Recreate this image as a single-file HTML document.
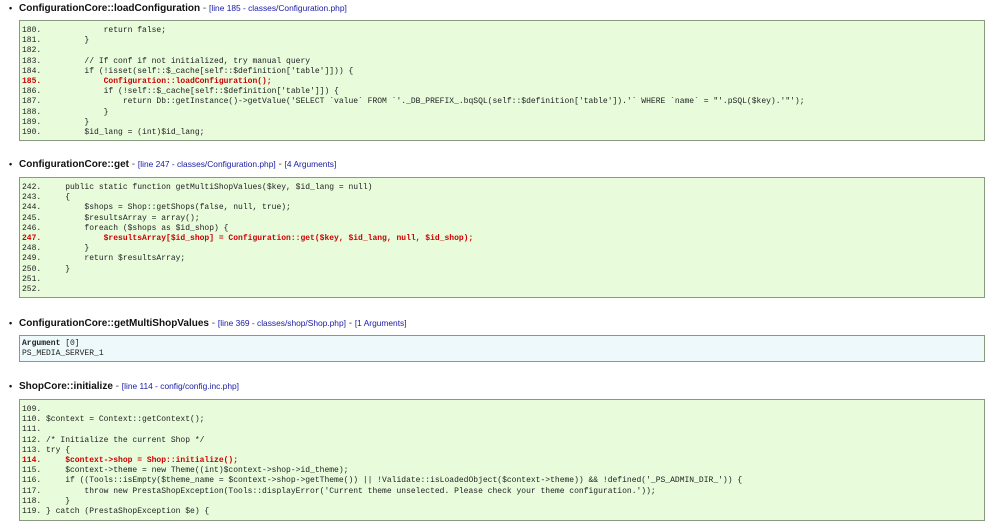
<!DOCTYPE html>
<html><head><meta charset="utf-8"><style>
html,body{margin:0;padding:0;background:#fff;width:1000px;height:527px;overflow:hidden}
.h{position:absolute;left:9px;font-family:"Liberation Sans",sans-serif;font-size:10px;font-weight:bold;color:#111;white-space:nowrap;line-height:12px}
.h .b{display:inline-block;width:10px;font-size:9px}
.h .l{font-weight:normal;font-size:8.4px;color:#1a1aa6}
.h .d{font-weight:normal;color:#444}
.box{position:absolute;left:19px;width:966px;border:1px solid #8a9a80;background:#e8fcdc;box-sizing:border-box}
pre{margin:0;padding:5px 0 0 2px;font-family:"Liberation Mono",monospace;font-size:8px;line-height:10.2px;color:#222}
.r{color:#c00;font-weight:bold}
.blue{background:#eef9fb}
</style></head><body>

<div class="h" style="top:2px"><span class="b">•</span>ConfigurationCore::loadConfiguration <span class="d">-</span> <span class="l">[line 185 - classes/Configuration.php]</span></div>
<div class="box" style="top:20px;height:121px"><pre>180.             return false;
181.         }
182.
183.         // If conf if not initialized, try manual query
184.         if (!isset(self::$_cache[self::$definition['table']])) {
<span class="r">185.             Configuration::loadConfiguration();</span>
186.             if (!self::$_cache[self::$definition['table']]) {
187.                 return Db::getInstance()->getValue('SELECT `value` FROM `'._DB_PREFIX_.bqSQL(self::$definition['table']).'` WHERE `name` = "'.pSQL($key).'"');
188.             }
189.         }
190.         $id_lang = (int)$id_lang;</pre></div>

<div class="h" style="top:158px"><span class="b">•</span>ConfigurationCore::get <span class="d">-</span> <span class="l">[line 247 - classes/Configuration.php]</span> <span class="d">-</span> <span class="l">[4 Arguments]</span></div>
<div class="box" style="top:177px;height:121px"><pre>242.     public static function getMultiShopValues($key, $id_lang = null)
243.     {
244.         $shops = Shop::getShops(false, null, true);
245.         $resultsArray = array();
246.         foreach ($shops as $id_shop) {
<span class="r">247.             $resultsArray[$id_shop] = Configuration::get($key, $id_lang, null, $id_shop);</span>
248.         }
249.         return $resultsArray;
250.     }
251.
252.</pre></div>

<div class="h" style="top:317px"><span class="b">•</span>ConfigurationCore::getMultiShopValues <span class="d">-</span> <span class="l">[line 369 - classes/shop/Shop.php]</span> <span class="d">-</span> <span class="l">[1 Arguments]</span></div>
<div class="box blue" style="top:335px;height:27px"><pre style="padding-top:3px"><b>Argument</b> [0]
PS_MEDIA_SERVER_1</pre></div>

<div class="h" style="top:380px"><span class="b">•</span>ShopCore::initialize <span class="d">-</span> <span class="l">[line 114 - config/config.inc.php]</span></div>
<div class="box" style="top:399px;height:122px"><pre>109.
110. $context = Context::getContext();
111.
112. /* Initialize the current Shop */
113. try {
<span class="r">114.     $context-&gt;shop = Shop::initialize();</span>
115.     $context-&gt;theme = new Theme((int)$context-&gt;shop-&gt;id_theme);
116.     if ((Tools::isEmpty($theme_name = $context-&gt;shop-&gt;getTheme()) || !Validate::isLoadedObject($context-&gt;theme)) &amp;&amp; !defined('_PS_ADMIN_DIR_')) {
117.         throw new PrestaShopException(Tools::displayError('Current theme unselected. Please check your theme configuration.'));
118.     }
119. } catch (PrestaShopException $e) {</pre></div>
</body></html>
